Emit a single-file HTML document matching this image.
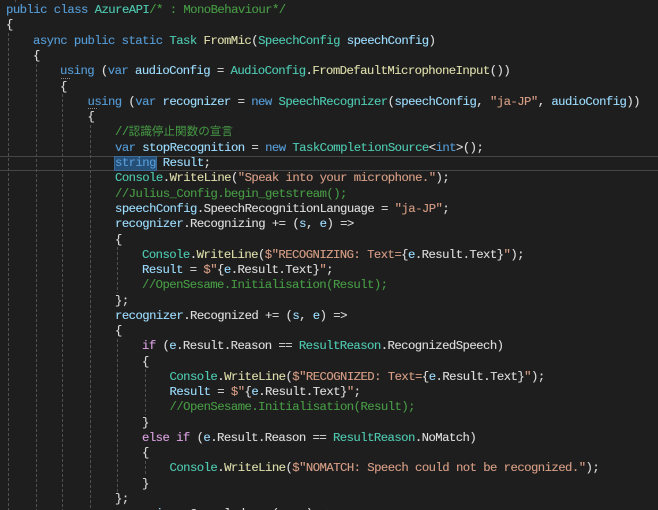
<!DOCTYPE html>
<html>
<head>
<meta charset="utf-8">
<style>
html,body{margin:0;padding:0;background:#1e1e1e;}
#e{position:relative;width:658px;height:510px;overflow:hidden;background:#1e1e1e;font-family:"Liberation Mono","Noto Sans CJK JP",monospace;font-size:12.3px;letter-spacing:-0.56px;color:#dcdcdc;font-weight:400;-webkit-text-stroke:0.12px;}
.l{position:absolute;left:6px;height:15px;line-height:15px;white-space:pre;margin-top:1px;}
.k{color:#569cd6}.c{color:#d8a0df}.t{color:#4ec9b0}.m{color:#dcdcaa}.v{color:#9cdcfe}.s{color:#d69d85}.g{color:#479a45}
.j{font-size:11.6px;letter-spacing:0;-webkit-text-stroke:0;}
.d{position:absolute;width:1px;background:repeating-linear-gradient(to bottom,#505050 0,#505050 3px,transparent 3px,transparent 5px);}
.cur{position:absolute;left:0;width:658px;top:156px;height:13px;border-top:1px solid #464646;border-bottom:1px solid #464646;}
.sel{position:absolute;left:115px;top:157px;width:41px;height:13px;background:#264f78;outline:1px solid #3c6a94;}
.q{position:absolute;height:1px;width:10px;background:repeating-linear-gradient(to right,#8a8a8a 0,#8a8a8a 1px,transparent 1px,transparent 2px);}
</style>
</head>
<body>
<div id="e">
<div class="cur"></div>
<div class="sel"></div>
<div class="d" style="left:15px;top:0;height:2px"></div>
<div class="d" style="left:8px;top:33px;height:477px"></div>
<div class="d" style="left:36px;top:64px;height:446px"></div>
<div class="d" style="left:62px;top:94px;height:416px"></div>
<div class="d" style="left:90px;top:125px;height:385px"></div>
<div class="d" style="left:117px;top:247px;height:46px"></div>
<div class="d" style="left:117px;top:339px;height:153px"></div>
<div class="d" style="left:145px;top:369px;height:46px"></div>
<div class="d" style="left:145px;top:461px;height:15px"></div>
<div class="q" style="left:61px;top:78px"></div>
<div class="q" style="left:88px;top:108px"></div>

<div class="l" style="top:2px"><span class="k">public class</span> <span class="t">AzureAPI</span><span class="g">/* : MonoBehaviour*/</span></div>
<div class="l" style="top:17px">{</div>
<div class="l" style="top:33px;left:33px"><span class="k">async public static</span> <span class="t">Task</span> <span class="m">FromMic</span>(<span class="t">SpeechConfig</span> <span class="v">speechConfig</span>)</div>
<div class="l" style="top:48px;left:33px">{</div>
<div class="l" style="top:63px;left:60px"><span class="k">using</span> (<span class="k">var</span> <span class="v">audioConfig</span> = <span class="t">AudioConfig</span>.<span class="m">FromDefaultMicrophoneInput</span>())</div>
<div class="l" style="top:79px;left:60px">{</div>
<div class="l" style="top:94px;left:87.5px"><span class="k">using</span> (<span class="k">var</span> <span class="v">recognizer</span> = <span class="k">new</span> <span class="t">SpeechRecognizer</span>(<span class="v">speechConfig</span>, <span class="s">"ja-JP"</span>, <span class="v">audioConfig</span>))</div>
<div class="l" style="top:109px;left:87.5px">{</div>
<div class="l" style="top:124px;left:115px"><span class="g">//<span class="j">認識停止関数の宣言</span></span></div>
<div class="l" style="top:140px;left:115px"><span class="k">var</span> <span class="v">stopRecognition</span> = <span class="k">new</span> <span class="t">TaskCompletionSource</span>&lt;<span class="k">int</span>&gt;();</div>
<div class="l" style="top:155px;left:115px"><span class="k">string</span> <span class="v">Result</span>;</div>
<div class="l" style="top:170px;left:115px"><span class="t">Console</span>.<span class="m">WriteLine</span>(<span class="s">"Speak into your microphone."</span>);</div>
<div class="l" style="top:186px;left:115px"><span class="g">//Julius_Config.begin_getstream();</span></div>
<div class="l" style="top:201px;left:115px"><span class="v">speechConfig</span>.SpeechRecognitionLanguage = <span class="s">"ja-JP"</span>;</div>
<div class="l" style="top:216px;left:115px"><span class="v">recognizer</span>.Recognizing += (<span class="v">s</span>, <span class="v">e</span>) =&gt;</div>
<div class="l" style="top:232px;left:115px">{</div>
<div class="l" style="top:247px;left:142px"><span class="t">Console</span>.<span class="m">WriteLine</span>(<span class="s">$"RECOGNIZING: Text=</span>{<span class="v">e</span>.Result.Text}<span class="s">"</span>);</div>
<div class="l" style="top:262px;left:142px"><span class="v">Result</span> = <span class="s">$"</span>{<span class="v">e</span>.Result.Text}<span class="s">"</span>;</div>
<div class="l" style="top:277px;left:142px"><span class="g">//OpenSesame.Initialisation(Result);</span></div>
<div class="l" style="top:293px;left:115px">};</div>
<div class="l" style="top:308px;left:115px"><span class="v">recognizer</span>.Recognized += (<span class="v">s</span>, <span class="v">e</span>) =&gt;</div>
<div class="l" style="top:323px;left:115px">{</div>
<div class="l" style="top:338px;left:142px"><span class="c">if</span> (<span class="v">e</span>.Result.Reason == <span class="t">ResultReason</span>.RecognizedSpeech)</div>
<div class="l" style="top:354px;left:142px">{</div>
<div class="l" style="top:369px;left:169.5px"><span class="t">Console</span>.<span class="m">WriteLine</span>(<span class="s">$"RECOGNIZED: Text=</span>{<span class="v">e</span>.Result.Text}<span class="s">"</span>);</div>
<div class="l" style="top:384px;left:169.5px"><span class="v">Result</span> = <span class="s">$"</span>{<span class="v">e</span>.Result.Text}<span class="s">"</span>;</div>
<div class="l" style="top:399px;left:169.5px"><span class="g">//OpenSesame.Initialisation(Result);</span></div>
<div class="l" style="top:415px;left:142px">}</div>
<div class="l" style="top:430px;left:142px"><span class="c">else if</span> (<span class="v">e</span>.Result.Reason == <span class="t">ResultReason</span>.NoMatch)</div>
<div class="l" style="top:445px;left:142px">{</div>
<div class="l" style="top:460px;left:169.5px"><span class="t">Console</span>.<span class="m">WriteLine</span>(<span class="s">$"NOMATCH: Speech could not be recognized."</span>);</div>
<div class="l" style="top:476px;left:142px">}</div>
<div class="l" style="top:491px;left:115px">};</div>
<div class="l" style="top:506px;left:115px"><span class="v">recognizer</span>.Canceled += (<span class="v">s</span>, <span class="v">e</span>) =&gt;</div>
</div>
</body>
</html>
